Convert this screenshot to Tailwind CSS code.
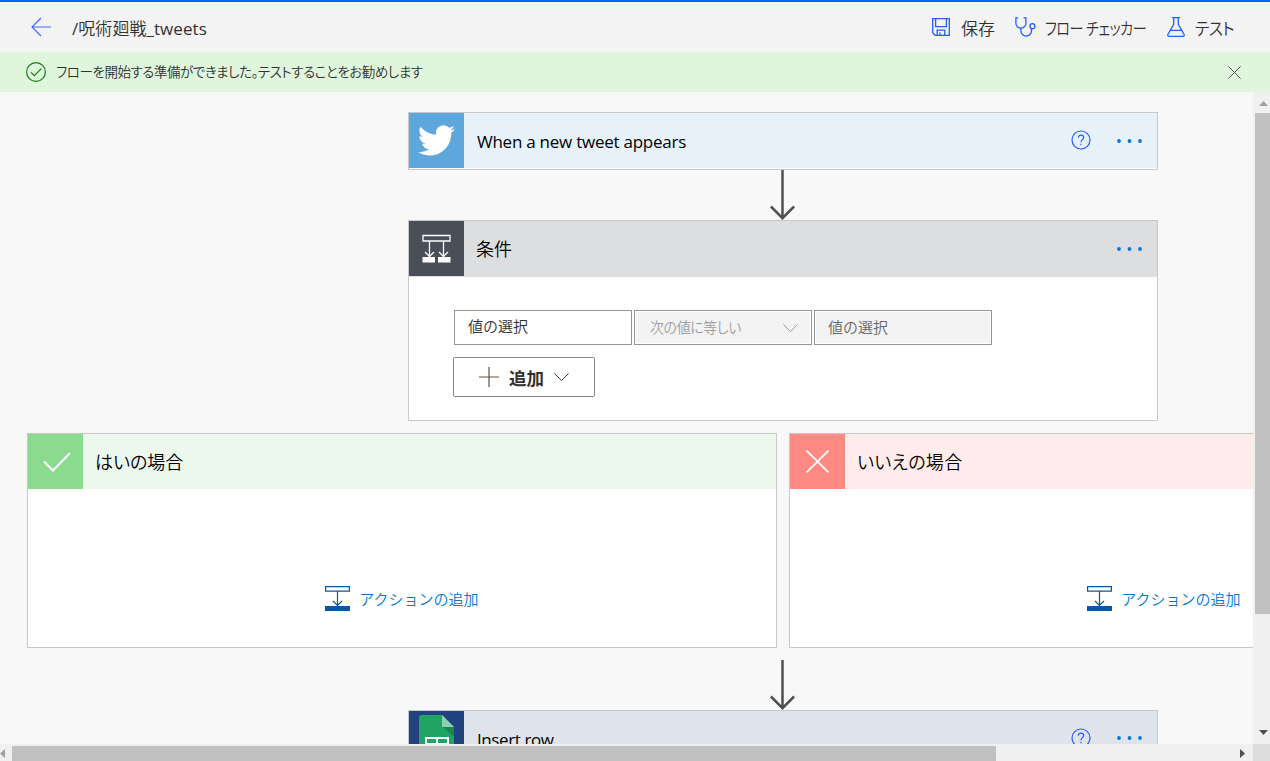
<!DOCTYPE html>
<html lang="ja">
<head>
    <meta charset="UTF-8">
    <meta name="viewport" content="width=device-width, initial-scale=1.0">
    <title>/呪術廻戦_tweets</title>
    <script src="https://cdn.jsdelivr.net/npm/@tailwindcss/browser@4"></script>
</head>
<body class="h-screen overflow-hidden bg-[#f8f8f8] font-['Open_Sans','Noto_Sans_CJK_JP',sans-serif] text-[#323130]">
    <div class="flex h-full flex-col whitespace-nowrap">
        <!-- Header -->
        <header class="flex h-[52px] shrink-0 items-center border-t-2 border-[#0062ff] bg-[#f3f3f3] pl-[31px]">
            <svg class="mb-px h-5 w-5 shrink-0" viewBox="0 0 20 20" fill="none" stroke="#3f6bff" stroke-width="1.2">
                <path d="M20 10H1M10 1L1 10l9 9"/>
            </svg>
            <h1 class="ml-[21px] pt-1 text-[17px] leading-6 tracking-[0.05px]">/<span class="font-[350]">呪術廻戦</span>_tweets</h1>
            <nav class="ml-auto flex items-center pt-0.5 text-[17px] leading-6 font-[350]">
                <button class="flex items-center">
                    <svg class="mb-0.5 ml-px h-[18px] w-[18px]" viewBox="0 0 18 18" fill="none" stroke="#1f5fff" stroke-width="1.3">
                        <path d="M.7.7h16.6v16.6H3.2L.7 14.8zM3.6.7v8h10.8v-8M5.2 17.3v-5.1h7.6v5.1M8 17v-2.4"/>
                    </svg>
                    <span class="ml-[11px] w-[54px] pt-0.5 text-left">保存</span>
                </button>
                <button class="flex items-center">
                    <svg class="mb-0.5 h-5 w-[21px]" viewBox="0 0 21 20" fill="none" stroke="#1f5fff" stroke-width="1.3">
                        <path d="M3.2.8H.9v5.4a5 5 0 0 0 10 0V.8H8.6M5.9 11.2v2.6a5.3 5.3 0 0 0 10.6 0v-2"/>
                        <circle cx="17.4" cy="9.2" r="2.5"/>
                    </svg>
                    <span class="ml-[9px] w-[122px] origin-left scale-x-[.83] pt-0.5 text-left tracking-[-0.6px] [font-feature-settings:'palt']">フロー チェッカー</span>
                </button>
                <button class="flex items-center">
                    <svg class="mb-0.5 h-5 w-[18px]" viewBox="0 0 18 20" fill="none" stroke="#1f5fff" stroke-width="1.3">
                        <path d="M5 .7h8M6.7.7v6.6L1 17.3c-.6 1.1 0 2 1 2h14c1 0 1.6-.9 1-2L11.3 7.3V.7M3.6 13.3h10.8"/>
                    </svg>
                    <span class="ml-2.5 w-[75px] origin-left scale-x-[.93] pt-0.5 text-left tracking-[-0.6px] [font-feature-settings:'palt']">テスト</span>
                </button>
            </nav>
        </header>

        <!-- Ready message -->
        <div class="flex h-10 shrink-0 items-center bg-[#dff6dd] pl-[26px] pr-[29px]">
            <svg class="h-5 w-5" viewBox="0 0 20 20" fill="none" stroke="#107c10" stroke-width="1.2">
                <circle cx="10" cy="10" r="9.4"/>
                <path d="M5 10.4l3.3 3.3 7-7"/>
            </svg>
            <p class="ml-2.5 pt-px text-[13.5px] font-[350] tracking-[-0.45px] [font-feature-settings:'palt']">フローを開始する準備ができました。テストすることをお勧めします</p>
            <svg class="ml-auto h-[13px] w-[13px]" viewBox="0 0 13 13" fill="none" stroke="#4c5a4b">
                <path d="M.4.4l12.2 12.2M12.6.4L.4 12.6"/>
            </svg>
        </div>

        <div class="flex min-h-0 flex-1">
            <!-- Flow designer -->
            <main class="min-w-0 flex-1 overflow-hidden">
                <div class="flex w-[1566px] flex-col items-center pt-5 text-black">
                    <section class="flex h-[58px] w-[750px] border border-[#c8c8c8] bg-white pb-px">
                        <div class="flex w-[55px] items-center justify-center bg-[#5ea7dc]">
                            <svg class="h-[37px] w-[37px]" viewBox="0 0 24 24" fill="#fff">
                                <path d="M23.95 4.57a10 10 0 0 1-2.82.77 4.96 4.96 0 0 0 2.16-2.72c-.95.56-2 .96-3.12 1.18a4.92 4.92 0 0 0-8.38 4.48C7.69 8.09 4.07 6.13 1.64 3.16a4.82 4.82 0 0 0-.67 2.48c0 1.71.87 3.21 2.19 4.1a4.9 4.9 0 0 1-2.23-.62v.06a4.92 4.92 0 0 0 3.95 4.83 5 5 0 0 1-2.21.08 4.94 4.94 0 0 0 4.6 3.42A9.87 9.87 0 0 1 0 19.54a13.99 13.99 0 0 0 7.55 2.21c9.05 0 14-7.5 14-13.98 0-.21 0-.42-.02-.63a9.94 9.94 0 0 0 2.42-2.57z"/>
                            </svg>
                        </div>
                        <div class="flex flex-1 items-center bg-[#e7f1fa] pl-[13px] pr-[15px]">
                            <h2 class="pt-0.5 text-[17px] tracking-[-0.25px]">When a new tweet appears</h2>
                            <svg class="mb-px ml-auto h-5 w-5" viewBox="0 0 20 20" fill="none" stroke="#2b5cff" stroke-width="1.2">
                                <circle cx="10" cy="10" r="9"/>
                                <path d="M7.3 7.8c0-3.7 5.4-3.4 5.4-.3 0 2-2.7 2.3-2.7 4.7M10 13.8v1.4"/>
                            </svg>
                            <svg class="ml-[26px] h-1 w-[25px]" viewBox="0 0 25 4" fill="#0a74d8">
                                <circle cx="2" cy="2" r="1.9"/><circle cx="12.5" cy="2" r="1.9"/><circle cx="23" cy="2" r="1.9"/>
                            </svg>
                        </div>
                    </section>

                    <svg class="h-[50px] w-[26px]" viewBox="0 0 26 50" fill="none" stroke="#505050" stroke-width="2.5">
                        <path d="M12.5 0v48M.9 36.5l11.6 11.7 11.6-11.7"/>
                    </svg>

                    <!-- Condition -->
                    <section class="h-[201px] w-[750px] border border-[#c8c8c8] bg-white">
                        <div class="flex h-14 bg-[#dddee0]">
                            <div class="flex h-[55px] w-[55px] items-center justify-center bg-[#484f58]">
                                <svg class="h-[29px] w-[29px]" viewBox="0 0 29 29" fill="none" stroke="#fff" stroke-width="1.3">
                                    <path d="M1 1.5h27V7H1zM7.500 7v15M3 18l4.500 4.500L12 18M21.500 7v15M17 18l4.500 4.500L26 18"/>
                                    <path fill="#fff" stroke="none" d="M.5 23H13v5.500H.5zM16 23h12.500v5.500H16z"/>
                                </svg>
                            </div>
                            <div class="flex flex-1 items-center pl-3 pr-[15px]">
                                <h2 class="text-[18px] font-[350]">条件</h2>
                                <svg class="ml-auto h-1 w-[25px]" viewBox="0 0 25 4" fill="#0a74d8">
                                    <circle cx="2" cy="2" r="1.9"/><circle cx="12.5" cy="2" r="1.9"/><circle cx="23" cy="2" r="1.9"/>
                                </svg>
                            </div>
                        </div>
                        <div class="pl-11 pt-[33px] text-[15px] font-[350] text-[#323130]">
                            <div class="ml-px flex gap-0.5">
                                <div class="h-[35px] w-[178px] border border-[#949494] pl-[13px] leading-[31px]">値の選択</div>
                                <div class="flex h-[35px] w-[178px] items-center justify-between border border-[#949494] bg-[#f3f3f3] pl-[15px] pr-[13px] text-[#a0a0a0] inset-ring inset-ring-white">
                                    <span class="origin-left scale-x-[.93] tracking-[-0.4px] [font-feature-settings:'palt']">次の値に等しい</span>
                                    <svg class="h-2 w-[15px]" viewBox="0 0 15 8" fill="none" stroke="#999">
                                        <path d="M.4.4l7.1 7.1L14.6.4"/>
                                    </svg>
                                </div>
                                <div class="h-[35px] w-[178px] border border-[#949494] bg-[#f3f3f3] pl-[13px] leading-[33px] text-[#666] inset-ring inset-ring-white">値の選択</div>
                            </div>
                            <button class="mt-3 flex h-10 w-[142px] items-center rounded-xs border border-[#8a8886] pl-[25px]">
                                <svg class="h-5 w-5" viewBox="0 0 20 20" fill="none" stroke="#605040" stroke-width="1.2">
                                    <path d="M10 0v20M0 10h20"/>
                                </svg>
                                <span class="ml-2.5 pt-0.5 text-[17.5px] font-bold">追加</span>
                                <svg class="ml-2.5 h-2 w-[15px]" viewBox="0 0 15 8" fill="none" stroke="#444">
                                    <path d="M.4.4l7.1 7.1L14.6.4"/>
                                </svg>
                            </button>
                        </div>
                    </section>

                    <!-- Yes / no branches -->
                    <div class="my-3 flex gap-3">
                        <section class="flex h-[215px] w-[750px] flex-col border border-[#c8c8c8] bg-white">
                            <div class="flex h-[55px] bg-[#ecf7ee]">
                                <div class="flex w-[55px] items-center justify-center bg-[#8adb8d]">
                                    <svg class="ml-0.5 h-5 w-7" viewBox="0 0 28 20" fill="none" stroke="#fff" stroke-width="2">
                                        <path d="M1 9.5l9 9L27 1"/>
                                    </svg>
                                </div>
                                <h2 class="pl-3 pt-px text-[18px] leading-[55px] font-[350] [font-feature-settings:'palt']">はいの場合</h2>
                            </div>
                            <button class="mx-auto mt-[97px] flex h-[25px] items-center text-[15px] font-[350] text-[#0078d4]">
                                <svg class="h-[25px] w-[25px]" viewBox="0 0 25 25" fill="none" stroke="#0058ad" stroke-width="1.2">
                                    <path d="M.6.6h23.8v4.6H.6zM12.5 5.2v14M8 15l4.5 4.5L17 15"/>
                                    <path fill="#0058ad" stroke="none" d="M0 20h25v5H0z"/>
                                </svg>
                                <span class="ml-[9px] pt-0.5">アクションの追加</span>
                            </button>
                        </section>
                        <section class="flex h-[215px] w-[750px] flex-col border border-[#c8c8c8] bg-white">
                            <div class="flex h-[55px] bg-[#ffeceb]">
                                <div class="flex w-[55px] items-center justify-center bg-[#ff8a84]">
                                    <svg class="h-[23px] w-[23px]" viewBox="0 0 23 23" fill="none" stroke="#fff" stroke-width="1.6">
                                        <path d="M.5.5l22 22M22.5.5l-22 22"/>
                                    </svg>
                                </div>
                                <h2 class="pl-3 pt-px text-[18px] leading-[55px] font-[350] tracking-[0.3px] [font-feature-settings:'palt']">いいえの場合</h2>
                            </div>
                            <button class="mx-auto mt-[97px] flex h-[25px] items-center text-[15px] font-[350] text-[#0078d4]">
                                <svg class="h-[25px] w-[25px]" viewBox="0 0 25 25" fill="none" stroke="#0058ad" stroke-width="1.2">
                                    <path d="M.6.6h23.8v4.6H.6zM12.5 5.2v14M8 15l4.5 4.5L17 15"/>
                                    <path fill="#0058ad" stroke="none" d="M0 20h25v5H0z"/>
                                </svg>
                                <span class="ml-[9px] pt-0.5">アクションの追加</span>
                            </button>
                        </section>
                    </div>

                    <svg class="h-[50px] w-[26px]" viewBox="0 0 26 50" fill="none" stroke="#505050" stroke-width="2.5">
                        <path d="M12.5 0v48M.9 36.5l11.6 11.7 11.6-11.7"/>
                    </svg>

                    <section class="flex h-[58px] w-[750px] border border-[#c8c8c8] bg-white pb-px">
                        <div class="flex w-[55px] justify-center bg-[#20427f] pt-1">
                            <svg class="h-12 w-[35px]" viewBox="0 0 35 48">
                                <path fill="#20a464" d="M3 0h20l12 12v33a3 3 0 0 1-3 3H3a3 3 0 0 1-3-3V3a3 3 0 0 1 3-3z"/>
                                <path fill="#8ed1b1" d="M23 0l12 12H23z"/>
                                <path fill="#18864f" d="M24 12h11v10z"/>
                                <path fill="none" stroke="#fff" stroke-width="2" d="M7 23h22v17H7zM7 29h22M7 35h22M18 23v17"/>
                            </svg>
                        </div>
                        <div class="flex flex-1 items-center bg-[#dfe3eb] pl-[13px] pr-[15px]">
                            <h2 class="pt-0.5 text-[17px] tracking-[-0.4px]">Insert row</h2>
                            <svg class="mb-0.5 ml-auto h-5 w-5" viewBox="0 0 20 20" fill="none" stroke="#2b5cff" stroke-width="1.2">
                                <circle cx="10" cy="10" r="9"/>
                                <path d="M7.3 7.8c0-3.7 5.4-3.4 5.4-.3 0 2-2.7 2.3-2.7 4.7M10 13.8v1.4"/>
                            </svg>
                            <svg class="mb-px ml-[26px] h-1 w-[25px]" viewBox="0 0 25 4" fill="#0a74d8">
                                <circle cx="2" cy="2" r="1.9"/><circle cx="12.5" cy="2" r="1.9"/><circle cx="23" cy="2" r="1.9"/>
                            </svg>
                        </div>
                    </section>
                </div>
            </main>

            <!-- Vertical scrollbar -->
            <div class="flex w-[17px] shrink-0 flex-col justify-between bg-[#f0f0f0] pb-[9px] pl-0.5 pt-[9px]">
                <div>
                    <svg class="ml-1 h-[5px] w-[9px]" viewBox="0 0 9 5" fill="#a0a0a0"><path d="M0 5l4.5-5L9 5z"/></svg>
                    <div class="mt-[7px] h-[501px] bg-[#c1c1c1]"></div>
                </div>
                <svg class="ml-1 h-[5px] w-[9px]" viewBox="0 0 9 5" fill="#505050"><path d="M0 0l4.5 5L9 0z"/></svg>
            </div>
        </div>

        <!-- Horizontal scrollbar -->
        <div class="flex h-[17px] shrink-0 bg-[#f0f0f0]">
            <div class="flex flex-1 items-center justify-between pr-2 pt-0.5">
                <div class="flex items-center">
                    <svg class="h-[9px] w-[5px]" viewBox="0 0 5 9" fill="#a0a0a0"><path d="M5 0L0 4.500 5 9z"/></svg>
                    <div class="ml-[7px] h-[15px] w-[984px] bg-[#c1c1c1]"></div>
                </div>
                <svg class="h-[9px] w-[5px]" viewBox="0 0 5 9" fill="#505050"><path d="M0 0l5 4.500L0 9z"/></svg>
            </div>
            <div class="w-[17px] bg-[#dcdcdc]"></div>
        </div>
    </div>
</body>
</html>
